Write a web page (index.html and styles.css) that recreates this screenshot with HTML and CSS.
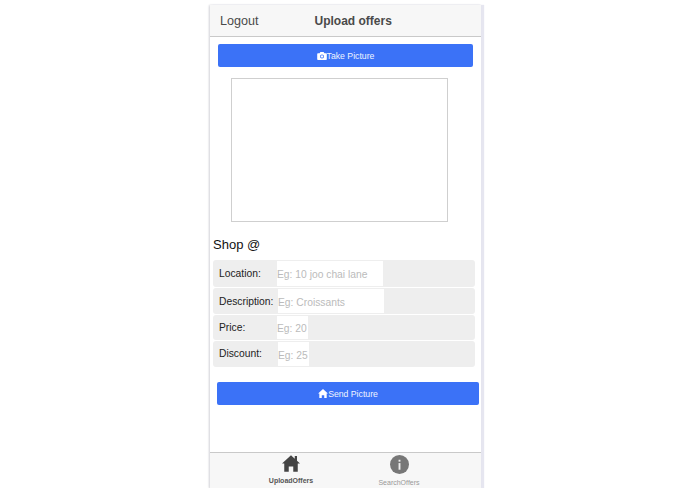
FILE: index.html
```html
<!DOCTYPE html>
<html lang="en">
<head>
  <meta charset="UTF-8" />
  <title>Upload offers</title>
  <link rel="stylesheet" href="styles.css">
</head>
<body>
  <div class="phone">
    <header class="topbar">
      <span class="logout">Logout</span>
      <span class="title">Upload offers</span>
    </header>

    <main class="content">
      <button class="btn btn-take">
        <svg class="btn-icon" viewBox="0 0 24 20" width="10" height="8"><path fill="#fff" fill-rule="evenodd" d="M8 0h8l2 3h4a2 2 0 0 1 2 2v13a2 2 0 0 1-2 2H2a2 2 0 0 1-2-2V5a2 2 0 0 1 2-2h4zM12 6a5 5 0 1 0 0 10 5 5 0 0 0 0-10z"/><circle cx="12" cy="11" r="3" fill="#fff"/></svg>Take Picture
      </button>

      <div class="preview"></div>

      <h2 class="shop">Shop @</h2>

      <div class="fields">
        <div class="field field-a">
          <label>Location:</label>
          <input class="input-long" placeholder="Eg: 10 joo chai lane">
        </div>
        <div class="field field-b">
          <label>Description:</label>
          <input class="input-long" placeholder="Eg: Croissants">
        </div>
        <div class="field field-c">
          <label>Price:</label>
          <input class="input-short" placeholder="Eg: 20">
        </div>
        <div class="field field-d">
          <label>Discount:</label>
          <input class="input-short" placeholder="Eg: 25">
        </div>
      </div>

      <button class="btn btn-send">
        <svg class="btn-icon" viewBox="0 0 24 22" width="10" height="9"><path fill="#fff" d="M12 0l12 11h-3v11h-6v-7H9v7H3V11H0z"/></svg>Send Picture
      </button>
    </main>

    <nav class="tabbar">
      <div class="tab tab-active">
        <svg viewBox="0 0 24 22" width="18" height="17"><path fill="#444" d="M12 0l5 4.5V1h3v6.2L24 11h-3v11h-6v-7H9v7H3V11H0z"/></svg>
        <span>UploadOffers</span>
      </div>
      <div class="tab">
        <svg viewBox="0 0 20 20" width="19" height="19"><circle cx="10" cy="10" r="10" fill="#777"/><rect x="9" y="8.5" width="2" height="7" fill="#eee"/><rect x="9" y="5" width="2" height="2" fill="#eee"/></svg>
        <span>SearchOffers</span>
      </div>
    </nav>
  </div>
</body>
</html>
```

FILE: styles.css
```css
body {
  margin: 0;
  background: #fff;
  font-family: "Liberation Sans", Arial, sans-serif;
}

.phone {
  width: 271px;
  height: 483px;
  margin: 5px 0 0 210px;
  display: flex;
  flex-direction: column;
  background: #fff;
  box-shadow: -1px 0 2px #dcdce2, 3px 0 1px #e6e6f0, 0 1px 2px #bbb;
}

.topbar {
  height: 31px;
  flex-shrink: 0;
  background: #f7f7f7;
  border-bottom: 1px solid #c9c9c9;
  display: flex;
  align-items: center;
  color: #4a4a4a;
  font-size: 12.6px;
}

.logout {
  margin-left: 10px;
}

.title {
  margin-left: 56px;
  font-weight: bold;
  font-size: 12px;
}

.content {
  flex: 1;
  padding-top: 7px;
  display: flex;
  flex-direction: column;
  align-items: flex-start;
}

.btn {
  height: 23px;
  padding: 0;
  border: none;
  border-radius: 2px;
  background: #3b72f7;
  color: #f0f4ff;
  font-family: inherit;
  font-size: 8.7px;
  display: flex;
  align-items: center;
  justify-content: center;
}

.btn-take {
  width: 255px;
  margin-left: 8px;
}

.btn-send {
  width: 262px;
  margin: 15px 0 0 7px;
}

.preview {
  box-sizing: border-box;
  width: 217px;
  height: 144px;
  margin: 11px 0 0 21px;
  border: 1px solid #cfcfcf;
}

.shop {
  margin: 15px 0 8px 3px;
  font-size: 13px;
  line-height: 15px;
  font-weight: normal;
  color: #111;
}

.fields {
  width: 262px;
  margin-left: 3px;
  display: flex;
  flex-direction: column;
  gap: 1px;
}

.field {
  display: flex;
  align-items: stretch;
  background: #eeeeee;
  border-radius: 3px;
}

.field-a { height: 27px; }
.field-b { height: 26px; }
.field-c { height: 25px; }
.field-d { height: 26px; }

.field label {
  width: 58px;
  padding: 7px 0 0 6px;
  flex-shrink: 0;
  font-size: 10.3px;
  line-height: 14px;
  color: #222;
}

.field-b label { width: 59px; }
.field-d label { width: 59px; }
.field-c label, .field-d label { padding-top: 6px; }

.field input {
  box-sizing: border-box;
  margin: 1px 0;
  padding: 2px 0 0;
  border: none;
  background: #fff;
  font-family: inherit;
  font-size: 10.3px;
}

.field input::placeholder {
  color: #bbb;
}

.input-long { width: 106px; }
.input-short { width: 31px; }

.tabbar {
  height: 35px;
  flex-shrink: 0;
  background: #f7f7f7;
  border-top: 1px solid #c9c9c9;
  display: flex;
}

.tab {
  width: 108px;
  padding-top: 2px;
  display: flex;
  flex-direction: column;
  align-items: center;
  font-size: 7px;
  color: #999;
}

.tab span {
  margin-top: 5px;
}

.tab-active {
  margin-left: 27px;
  color: #555;
  font-weight: bold;
}
```
